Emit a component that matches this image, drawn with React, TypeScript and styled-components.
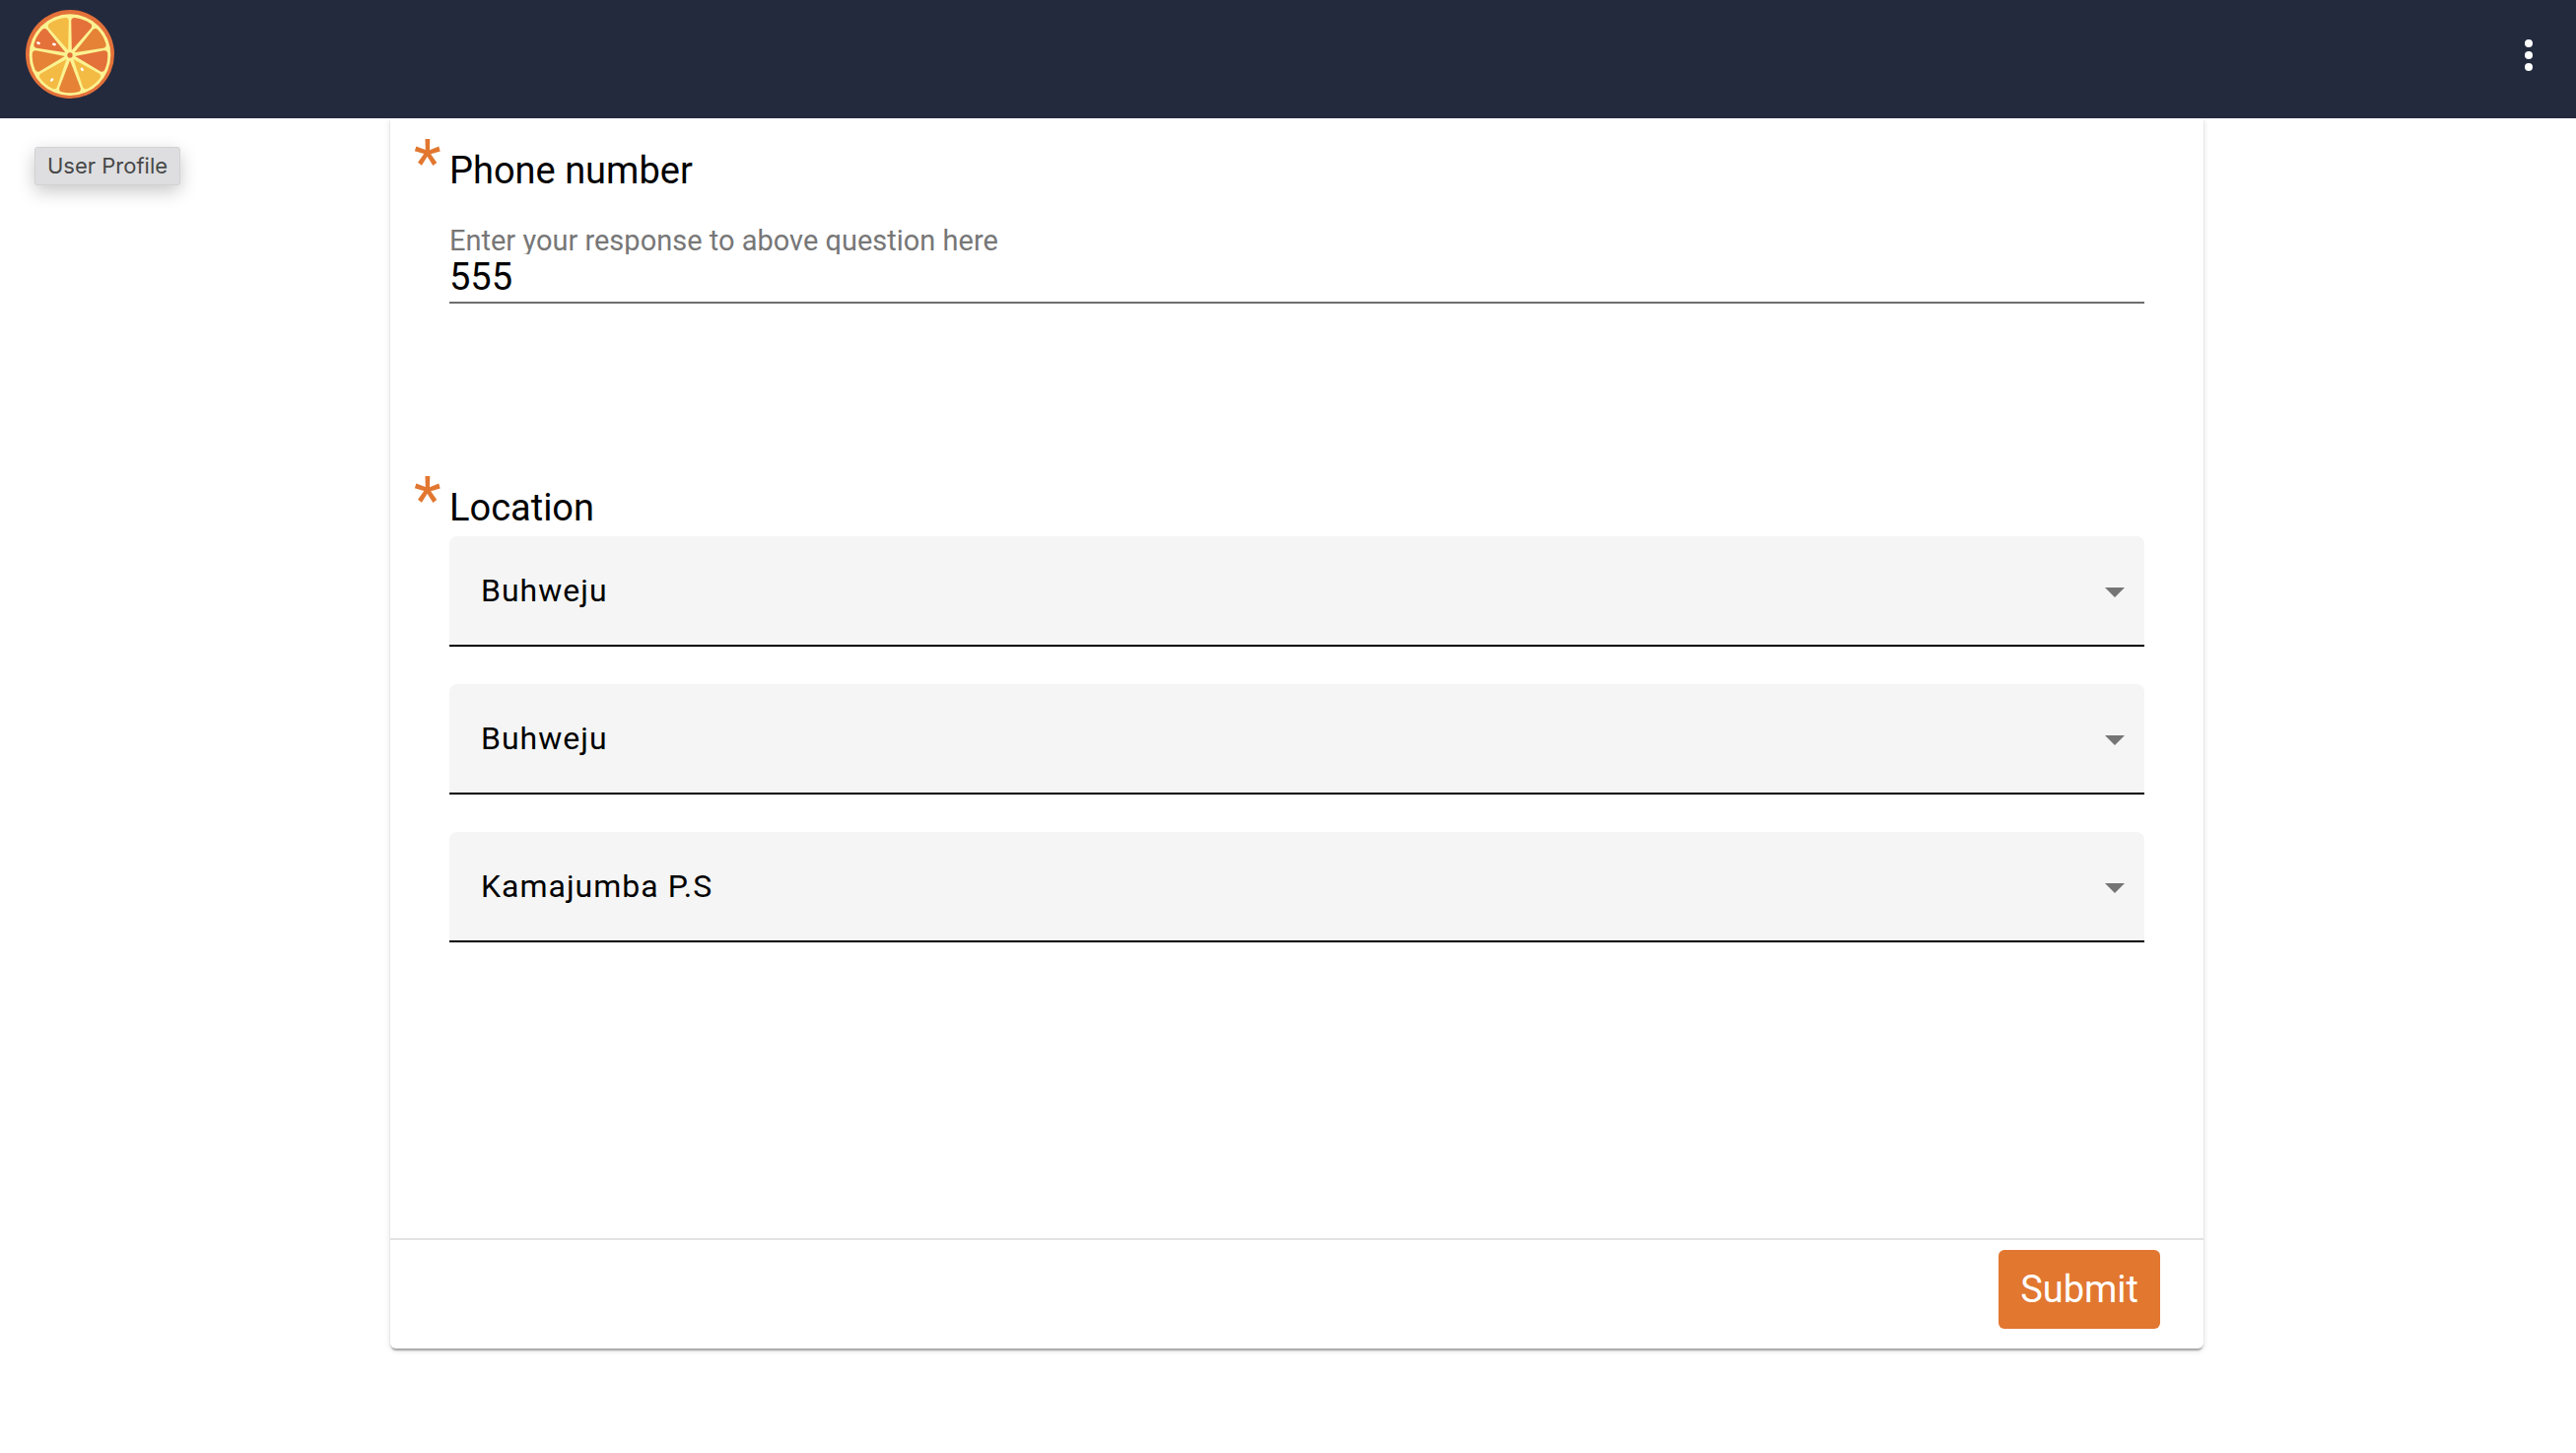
import React, { useState } from "react";
import styled, { createGlobalStyle } from "styled-components";

const GlobalStyle = createGlobalStyle`
  *, *::before, *::after { box-sizing: border-box; }
  body {
    margin: 0;
    background: #fff;
    color: #000;
    font-family: Roboto, "Liberation Sans", sans-serif;
    font-size: 38px;
  }
`;

const Header = styled.header`
  position: sticky;
  top: 0;
  z-index: 2;
  display: flex;
  align-items: flex-start;
  justify-content: space-between;
  height: 120px;
  padding: 10px 24px 20px 26px;
  background: #232a3e;
`;

const HomeLink = styled.a`
  display: block;
  width: 90px;
  height: 90px;

  svg {
    display: block;
    width: 100%;
    height: 100%;
  }
`;

const MenuButton = styled.button`
  display: flex;
  align-items: center;
  justify-content: center;
  width: 48px;
  height: 92px;
  padding: 0;
  border: 0;
  background: none;
  color: #fff;
  cursor: pointer;
`;

const Tooltip = styled.div`
  position: absolute;
  top: 149px;
  left: 35px;
  padding: 4px 12px;
  border: 1px solid #d2d2d4;
  border-radius: 3px;
  background: #dedee0;
  box-shadow: 0 6px 18px rgba(0, 0, 0, 0.22);
  color: #484848;
  font-family: Inter, "Liberation Sans", sans-serif;
  font-size: 22px;
  line-height: 29px;
`;

const Main = styled.main`
  padding: 0 378px 106px 396px;
`;

const Card = styled.form`
  border-radius: 0 0 6px 6px;
  background: #fff;
  box-shadow:
    0 4px 2px -2px rgba(0, 0, 0, 0.2),
    0 2px 2px rgba(0, 0, 0, 0.14),
    0 2px 6px rgba(0, 0, 0, 0.12);
`;

const Questions = styled.div`
  display: flex;
  flex-direction: column;
  gap: 184px;
  padding: 30px 60px 300px 24px;
`;

const Question = styled.section`
  display: grid;
  grid-template-columns: 36px 1fr;
`;

const Required = styled.span`
  height: 32px;
  color: #e27730;
  font-size: 64px;
  line-height: 32px;
`;

const QuestionBody = styled.div<{ $gap: number }>`
  display: flex;
  flex-direction: column;
  gap: ${(p) => p.$gap}px;
  min-width: 0;
`;

const QuestionTitle = styled.h2`
  margin: 0;
  font-size: 38px;
  font-weight: 400;
  line-height: 46px;
`;

const TextField = styled.div`
  display: flex;
  flex-direction: column;
`;

const FieldLabel = styled.label`
  height: 30px;
  overflow: hidden;
  color: #777;
  font-size: 29px;
  line-height: 32px;
`;

const TextInput = styled.input`
  width: 100%;
  height: 50px;
  padding: 0 0 2px;
  border: 0;
  border-bottom: 2px solid #6e6e6e;
  border-radius: 0;
  outline: 0;
  background: none;
  color: #000;
  font: inherit;
`;

const SelectStack = styled.div`
  display: flex;
  flex-direction: column;
  gap: 38px;
`;

const SelectField = styled.div`
  position: relative;
`;

const Select = styled.select`
  display: block;
  width: 100%;
  height: 112px;
  padding: 0 80px 0 32px;
  appearance: none;
  border: 0;
  border-bottom: 2px solid #000;
  border-radius: 8px 8px 0 0;
  outline: 0;
  background: #f5f5f5;
  color: #000;
  font-family: inherit;
  font-size: 32px;
  letter-spacing: 1px;
`;

const Arrow = styled.svg`
  position: absolute;
  top: 52px;
  right: 20px;
  width: 20px;
  height: 10px;
  fill: #757575;
  pointer-events: none;
`;

const Footer = styled.footer`
  display: flex;
  justify-content: flex-end;
  padding: 10px 44px 20px;
  border-top: 2px solid #e3e3e3;
`;

const SubmitButton = styled.button`
  height: 80px;
  padding: 0 22px;
  border: 0;
  border-radius: 6px;
  background: #e27730;
  color: #fff;
  font-family: inherit;
  font-size: 38px;
  cursor: pointer;
`;

const RED = "#e4713a";
const ORANGE = "#e58236";
const GOLD = "#f3ba44";
const WEDGES = [RED, ORANGE, RED, GOLD, ORANGE, GOLD, ORANGE, RED, GOLD];
const SEEDS = [
  { x: -96, y: -37, turn: 20 },
  { x: -48, y: -33, turn: 10 },
  { x: 37, y: 43, turn: 50 },
  { x: -55, y: 75, turn: -50 },
];

function OrangeLogo() {
  return (
    <svg viewBox="-135 -135 270 270" aria-hidden="true">
      <circle r="135" fill={RED} />
      <circle r="124" cy="2" fill="#fbf291" />
      <g transform="translate(0 3)">
        {WEDGES.map((color, i) => (
          <path
            key={i}
            d="M0 -16L-32 -99Q-35 -109 -25 -112Q0 -118 25 -112Q35 -109 32 -99Z"
            fill={color}
            transform={`rotate(${20 + i * 40})`}
          />
        ))}
        <circle r="16" fill="#fbf291" />
        <circle r="8" fill={RED} />
        {SEEDS.map((s) => (
          <ellipse
            key={s.x}
            rx="6"
            ry="4"
            fill="#fff"
            transform={`translate(${s.x} ${s.y}) rotate(${s.turn})`}
          />
        ))}
      </g>
    </svg>
  );
}

const LOCATION_LEVELS = [
  { name: "Region", value: "Buhweju" },
  { name: "District", value: "Buhweju" },
  { name: "School", value: "Kamajumba P.S" },
];

export default function App() {
  const [phone, setPhone] = useState("555");

  return (
    <>
      <GlobalStyle />
      <Header>
        <HomeLink href="#" aria-label="Home">
          <OrangeLogo />
        </HomeLink>
        <MenuButton type="button" aria-label="Menu">
          <svg width="8" height="32" viewBox="0 0 8 32" fill="currentColor">
            <circle cx="4" cy="4" r="4" />
            <circle cx="4" cy="16" r="4" />
            <circle cx="4" cy="28" r="4" />
          </svg>
        </MenuButton>
      </Header>
      <Tooltip role="tooltip">User Profile</Tooltip>
      <Main>
        <Card onSubmit={(e) => e.preventDefault()}>
          <Questions>
            <Question>
              <Required aria-hidden="true">*</Required>
              <QuestionBody $gap={32}>
                <QuestionTitle>Phone number</QuestionTitle>
                <TextField>
                  <FieldLabel htmlFor="phone">
                    Enter your response to above question here
                  </FieldLabel>
                  <TextInput
                    id="phone"
                    type="tel"
                    value={phone}
                    onChange={(e) => setPhone(e.target.value)}
                  />
                </TextField>
              </QuestionBody>
            </Question>
            <Question>
              <Required aria-hidden="true">*</Required>
              <QuestionBody $gap={6}>
                <QuestionTitle>Location</QuestionTitle>
                <SelectStack>
                  {LOCATION_LEVELS.map((level) => (
                    <SelectField key={level.name}>
                      <Select aria-label={level.name} defaultValue={level.value}>
                        <option>{level.value}</option>
                      </Select>
                      <Arrow viewBox="0 0 20 10" aria-hidden="true">
                        <path d="M0 0H20L10 10Z" />
                      </Arrow>
                    </SelectField>
                  ))}
                </SelectStack>
              </QuestionBody>
            </Question>
          </Questions>
          <Footer>
            <SubmitButton type="submit">Submit</SubmitButton>
          </Footer>
        </Card>
      </Main>
    </>
  );
}
